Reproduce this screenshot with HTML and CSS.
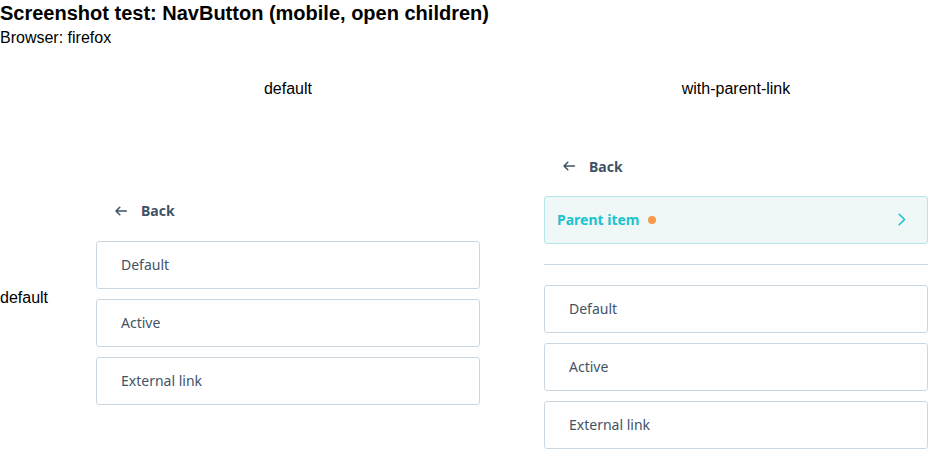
FILE: index.html
```html
<!DOCTYPE html>
<html>
<head>
<meta charset="utf-8">
<link rel="stylesheet" href="styles.css">
</head>
<body>
<h1 class="title">Screenshot test: NavButton (mobile, open children)</h1>
<div class="browser">Browser: firefox</div>
<div class="grid">
  <div class="colhead c1">default</div>
  <div class="colhead c2">with-parent-link</div>
  <div class="rowhead">default</div>
  <div class="cell c1">
    <div class="back">
      <svg class="back-icon" width="12" height="12" viewBox="0 0 12 12"><path d="M11.5 6H1M4.8 2.2L1 6l3.8 3.8" fill="none" stroke="#3f5366" stroke-width="1.5" stroke-linecap="round" stroke-linejoin="round"/></svg>
      <span>Back</span>
    </div>
    <div class="item">Default</div>
    <div class="item">Active</div>
    <div class="item">External link</div>
  </div>
  <div class="cell c2">
    <div class="back">
      <svg class="back-icon" width="12" height="12" viewBox="0 0 12 12"><path d="M11.5 6H1M4.8 2.2L1 6l3.8 3.8" fill="none" stroke="#3f5366" stroke-width="1.5" stroke-linecap="round" stroke-linejoin="round"/></svg>
      <span>Back</span>
    </div>
    <div class="parent">
      <span class="parent-label">Parent item</span>
      <span class="dot"></span>
      <svg class="chevron" width="8" height="13" viewBox="0 0 8 13"><path d="M1.2 1.2L6.5 6.5 1.2 11.8" fill="none" stroke="#1cc3cf" stroke-width="1.6" stroke-linecap="round" stroke-linejoin="round"/></svg>
    </div>
    <div class="divider"></div>
    <div class="item">Default</div>
    <div class="item">Active</div>
    <div class="item">External link</div>
  </div>
</div>
</body>
</html>
```
FILE: styles.css
```css
html, body {
  margin: 0;
  padding: 0;
  background: #fff;
}
body {
  font-family: "Liberation Sans", Arial, sans-serif;
  color: #000;
}
.title {
  font-size: 20px;
  font-weight: bold;
  line-height: 23px;
  margin: 2px 0 0 0;
}
.browser {
  font-size: 16px;
  line-height: 18px;
  margin-top: 4px;
}
.grid {
  display: grid;
  grid-template-columns: 96px 384px 64px 384px;
  grid-template-rows: auto auto;
  row-gap: 48px;
  margin-top: 33px;
}
.colhead {
  font-size: 16px;
  line-height: 18px;
  text-align: center;
  grid-row: 1;
}
.colhead.c1, .cell.c1 { grid-column: 2; }
.colhead.c2, .cell.c2 { grid-column: 4; }
.rowhead {
  grid-row: 2;
  grid-column: 1;
  font-size: 16px;
  line-height: 18px;
  align-self: center;
}
.cell {
  grid-row: 2;
  align-self: center;
  display: flex;
  flex-direction: column;
  font-family: "Noto Sans", sans-serif;
  font-size: 14px;
  color: #3f5366;
}
.back {
  height: 40px;
  display: flex;
  align-items: center;
  padding-left: 19px;
  margin-bottom: 10px;
  font-weight: bold;
}
.back-icon {
  margin-right: 14px;
}
.item {
  height: 48px;
  box-sizing: border-box;
  border: 1px solid #cbd8e2;
  border-radius: 3px;
  display: flex;
  align-items: center;
  padding-left: 24px;
  padding-bottom: 1px;
  margin-bottom: 10px;
}
.item:last-child { margin-bottom: 0; }
.parent {
  height: 48px;
  box-sizing: border-box;
  border: 1px solid #b5e6ea;
  border-radius: 3px;
  background: #f0f7f7;
  display: flex;
  align-items: center;
  padding: 0 21px 1px 12px;
  color: #1cc3cf;
  font-weight: bold;
}
.dot {
  width: 8px;
  height: 8px;
  border-radius: 50%;
  background: #f5994c;
  margin-left: 8px;
}
.chevron {
  margin-left: auto;
}
.divider {
  height: 1px;
  background: #c9d8e2;
  margin: 20px 0;
}
```
